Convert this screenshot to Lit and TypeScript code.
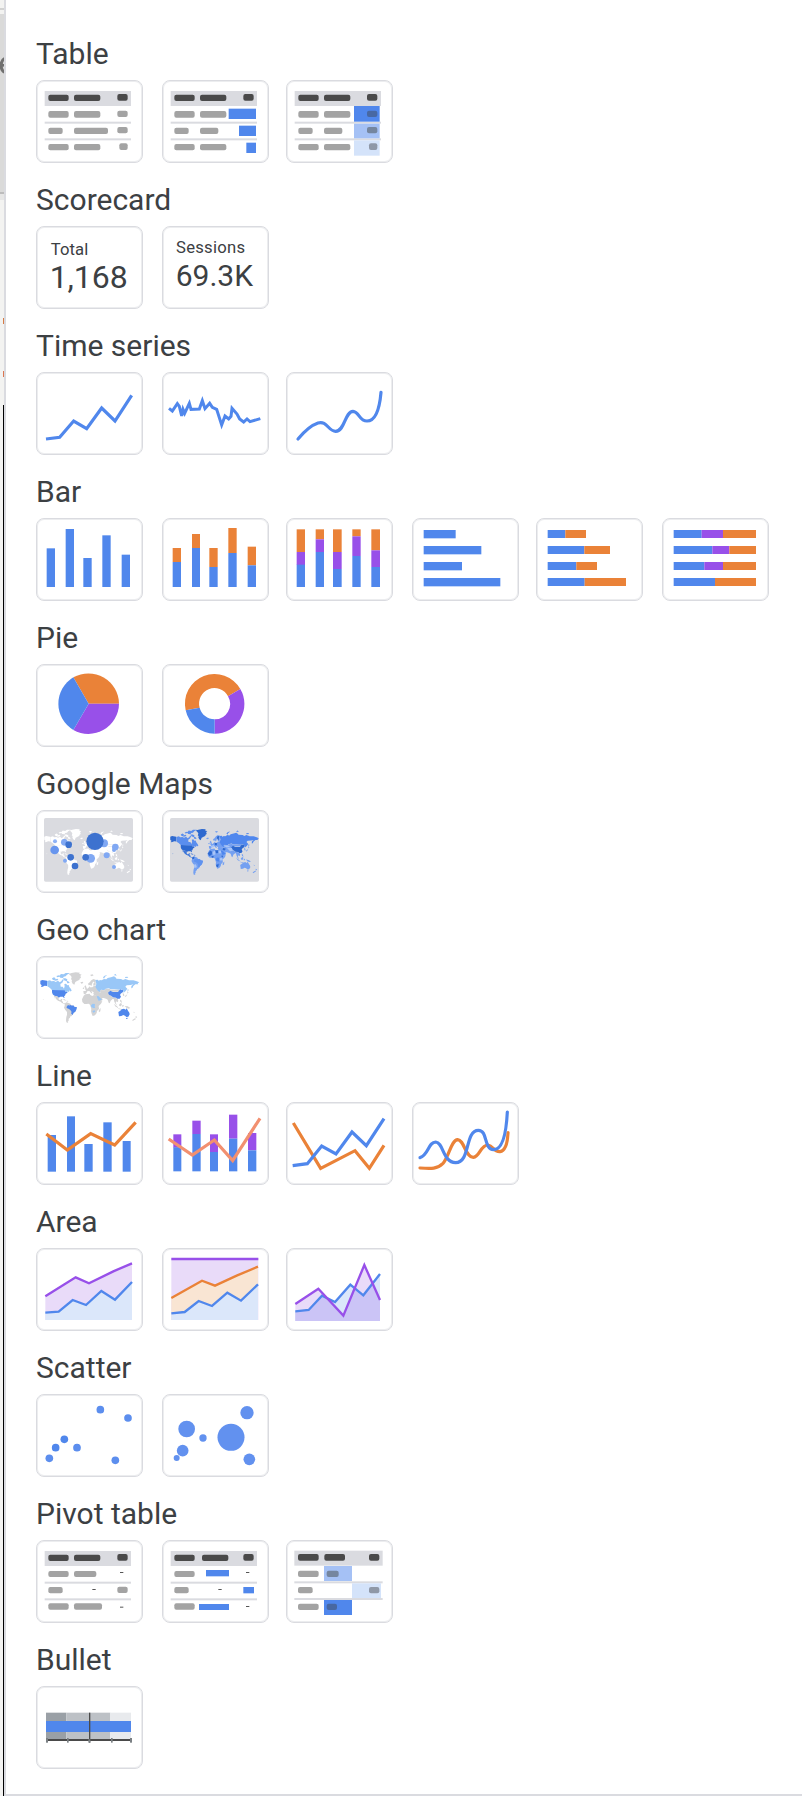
import { LitElement, html, svg, css } from "lit";
import { customElement } from "lit/decorators.js";

const BLUE = "#5087ec";
const ORANGE = "#ea8238";
const PURPLE = "#9850e9";
const RULE = "#dadbe0";
const DARK = "#4a4a4a";
const MID = "#a3a3a3";

type Box = [number, number, number, number, string?];

const rects = (list: Box[], fill = BLUE) =>
  list.map(([x, y, w, h, c]) => svg`<rect x=${x} y=${y} width=${w} height=${h} fill=${c ?? fill} />`);
const pills = (list: Box[], fill = MID) =>
  list.map(([x, y, w, h, c]) => svg`<rect x=${x} y=${y} width=${w} height=${h} rx="6" fill=${c ?? fill} />`);
const line = (points: string, stroke = BLUE, width = 9.6) =>
  svg`<polyline points=${points} fill="none" stroke=${stroke} stroke-width=${width} />`;
const curve = (d: string, stroke = BLUE, width = 9.6) =>
  svg`<path d=${d} fill="none" stroke=${stroke} stroke-width=${width} stroke-linecap="round" />`;
const area = (points: string, fill: string) => svg`<polygon points=${points} fill=${fill} />`;
const dots = (list: [number, number, number][], fill = "#6291ef") =>
  list.map(([x, y, r]) => svg`<circle cx=${x} cy=${y} r=${r} fill=${fill} />`);

/** Thumbnails are drawn on a 321 x 249 grid; x and y give the grid's origin. */
const card = (x: number, y: number, label: string, art: unknown) => html`
  <button class="card" aria-label=${label}>
    <svg viewBox="${x} ${y} 321 249" width="107" height="83">${art}</svg>
  </button>`;

const tableBase = (x: number, y: number, w = 259) => rects([
  [x, y, w, 45], [x, y + 92, w, 6], [x, y + 142, w, 6],
], RULE);

type Regions = Record<string, string>;
const LAND: Regions = {
  alaska: "M31 212L37 210L51 212V228L44 227L38 230L33 231L35 226L31 222Z",
  canada: "M51 213L60 211L64 214L72 213L77 216L84 212L89 217L94 214L98 208L101 210L97 218L91 222L92 230L98 230L102 236L104 229L103 222L108 221L112 226L116 225L118 231L123 237L125 243L119 241L117 246L112 244L108 248L105 242L66 240L59 233L52 229ZM66 205L72 202L77 205L74 208L83 206L85 210L77 212L68 209ZM79 198L87 196L88 200L82 202ZM87 198L93 192L101 193L107 189L120 189L111 194L107 199L101 200L99 204L91 203ZM99 205L106 205L112 208L111 212L117 215L119 219L112 220L110 214L102 211ZM119 240L124 241L121 245Z",
  greenland: "M116 192L125 189L137 187L150 188L147 191L155 194L151 197L153 203L148 207L149 209L141 213L136 216L133 224L128 221L125 215L126 210L123 208L125 201L121 196Z",
  usa: "M66 240L104 241L107 246L112 246L115 243L111 249L107 251L105 257L102 258L104 264L101 263L99 260L91 260L86 263L81 259L73 257L68 253L66 247Z",
  mexico: "M72 257L81 259L86 263L86 268L90 271L94 267L97 268L95 273L99 275L99 279L106 280L103 282L96 279L92 275L84 272L78 267L76 262L73 261L76 267L73 263ZM98 268L104 268L109 272L103 271ZM110 272L115 273L114 275L110 274ZM38 268L41 268L40 270Z",
  southAmerica: "M104 281L109 277L116 279L121 281L123 285L130 287L132 290L140 292L138 299L135 306L130 310L127 315L124 319L121 319L120 323L116 326L116 332L113 335L115 339L109 337L108 331L109 321L111 314L111 306L106 300L102 293L104 287Z",
  brazil: "M110 290L114 285L119 287L119 284L126 287L130 286L133 290L141 292L139 299L136 305L131 308L128 315L123 310L125 306L121 300L117 297L110 294Z",
  africa: "M161 257L166 253L179 251L181 255L187 258L192 255L200 257L202 264L207 273L217 274L213 281L206 288L207 297L201 303L200 309L195 316L188 318L185 311L183 304L184 297L182 290L180 284L176 281L169 282L163 282L157 276L156 268ZM209 297L212 294L211 304L207 307L206 302Z",
  europe: "M161 251L160 243L168 243L166 238L172 236L177 232L178 228L180 232L187 232L190 229L196 227L201 235L201 239L206 243L214 244L208 249L197 250L193 252L190 246L184 243L187 250L184 250L178 243L172 244L169 250L165 253ZM176 226L174 221L179 217L184 211L190 207L197 209L197 226L190 227L190 221L194 216L189 215L186 222L184 229L181 225ZM163 229L167 226L170 234L171 238L164 238L166 235ZM159 233L163 232L162 237L158 236ZM151 217L158 215L160 219L154 221ZM180 195L187 193L191 196L185 199Z",
  russia: "M196 210L203 209L208 214L208 210L215 211L222 207L229 208L233 204L243 202L252 199L258 203L259 206L273 207L279 210L286 207L297 211L310 211L318 213L328 217L323 220L325 223L316 223L310 228L307 234L304 235L304 228L310 223L302 225L290 226L286 230L292 236L287 243L281 248L279 241L274 237L266 239L253 238L243 238L236 235L225 237L224 241L213 239L210 246L203 242L200 237L196 230L199 222ZM219 202L224 197L232 195L225 200L222 206ZM251 195L257 192L260 197ZM285 201L292 200L295 203L286 204ZM293 237L296 239L293 246Z",
  asia: "M189 250L198 249L207 249L212 247L211 240L224 241L226 237L237 236L243 239L266 239L269 242L265 245L249 245L242 243L237 247L241 256L248 262L255 263L263 266L265 272L263 277L259 274L257 278L261 286L257 283L253 275L251 267L248 267L242 272L239 280L236 278L233 269L228 266L221 264L216 264L218 270L208 276L205 274L201 266L199 258L192 255ZM278 248L282 252L283 258L279 257ZM292 245L296 247L292 251ZM292 253L289 259L284 262L286 257ZM251 281L261 289L266 294L257 290ZM264 295L275 297L276 299L266 297ZM267 284L272 279L276 282L273 289L268 288ZM277 285L282 286L279 291L277 290ZM270 269L274 271L276 279L271 275ZM284 288L293 289L301 294L296 296L290 294Z",
  saudi: "M200 258L206 259L211 264L216 269L211 271L206 273L203 267Z",
  congo: "M183 286L188 281L195 282L194 291L196 294L190 294L184 291ZM187 303L194 301L196 305L190 308Z",
  china: "M234 248L241 242L249 246L264 246L270 238L279 240L279 246L272 251L270 255L273 260L269 266L262 266L258 263L249 262L243 257L237 254Z",
  australia: "M265 306L271 302L275 298L282 296L287 299L290 295L294 302L298 308L299 313L295 320L289 321L285 317L280 315L274 318L267 319ZM288 324L293 323L292 327L289 327Z",
  zealand: "M317 318L322 321L317 325ZM315 325L318 327L308 333L307 330ZM309 305L314 307L313 309Z",
};
const world = (base: string, tint: Regions = {}, accents: unknown = "") => svg`
  ${Object.entries(LAND).map(([name, d]) => svg`<path d=${d} fill=${tint[name] ?? base} />`)}${accents}`;

const choroplethPatches = svg`
  <path d="M156 268L165 258L172 263L169 273L162 276ZM169 276L176 276L176 282L170 282ZM204 272L208 279L202 281ZM181 257L192 257L192 266L184 267ZM184 305L193 304L191 313L186 312ZM104 281L112 278L111 285L105 287ZM187 212L195 209L193 224L188 220ZM180 232L188 234L186 241L180 240ZM208 249L217 252L213 258L206 256Z" fill="#2e69cf" />
  <path d="M172 263L181 258L182 271L175 273ZM192 258L200 259L202 267L193 268ZM196 284L204 281L207 289L199 292ZM221 250L237 249L241 259L231 260ZM208 241L225 241L232 246L220 248ZM109 305L117 303L120 313L112 316ZM166 243L178 239L177 247L168 249Z" fill="#a9c5f7" />`;

const sections: { title: string; cards: unknown[] }[] = [
  {
    title: "Table",
    cards: [
      card(108, 150, "Table", svg`
        ${tableBase(134, 183)}
        ${pills([[145, 194, 61, 19], [222, 194, 79, 19], [352, 192, 31, 20]], DARK)}
        ${pills([[145, 243, 61, 20], [222, 243, 79, 20], [352, 242, 31, 19], [145, 293, 43, 19], [222, 293, 102, 19], [352, 291, 31, 19], [145, 342, 61, 19], [222, 342, 79, 19], [358, 340, 25, 20]])}`),
      card(486, 150, "Table with bars", svg`
        ${tableBase(512, 183)}
        ${pills([[523, 194, 61, 19], [600, 194, 79, 19], [730, 192, 31, 20]], DARK)}
        ${pills([[523, 243, 61, 20], [600, 243, 79, 20], [523, 293, 43, 19], [600, 293, 55, 19], [523, 342, 61, 19], [600, 342, 79, 19]])}
        ${rects([[686, 236, 82, 31], [717, 287, 51, 31], [739, 338, 29, 31]])}`),
      card(858, 150, "Table with heatmap", svg`
        ${tableBase(884, 183)}
        ${rects([[1062, 228, 77, 47], [1062, 281, 77, 44, "#a5c1f5"], [1062, 331, 77, 46, "#d4e3fa"]])}
        ${pills([[895, 194, 61, 19], [972, 194, 79, 19], [1101, 192, 31, 20]], DARK)}
        ${pills([[895, 243, 61, 20], [972, 243, 79, 20], [1101, 242, 31, 19, "#4868a2"], [895, 293, 43, 19], [972, 293, 55, 19], [1101, 291, 31, 19, "#75869f"], [895, 342, 61, 19], [972, 342, 79, 19], [1107, 340, 25, 20, "#8f98a7"]])}`),
    ],
  },
  {
    title: "Scorecard",
    cards: [
      card(108, 153, "Scorecard", svg`
        <text class="num" x="152" y="240" font-size="50" textLength="113">Total</text>
        <text class="num" x="149" y="339" font-size="96" textLength="234">1,168</text>`),
      card(486, 153, "Compact scorecard", svg`
        <text class="num" x="528" y="235" font-size="50" textLength="207">Sessions</text>
        <text class="num" x="527" y="333" font-size="90" textLength="232">69.3K</text>`),
    ],
  },
  {
    title: "Time series",
    cards: [
      card(108, 591, "Time series", line("138,792 179,787 221,738 260,761 305,699 345,738 395,661")),
      card(486, 591, "Sparkline", line("507,700 517,708 532,686 538,694 545,723 549,703 554,715 568,685 573,703 598,702 607,677 615,701 629,685 637,697 650,703 665,750 675,723 686,732 693,724 696,700 711,717 719,732 731,741 741,732 750,740 781,731", BLUE, 9)),
      card(858, 591, "Smoothed time series", curve("M894 792C914 768 936 750 954 744C981 736 985 769 1007 769C1035 769 1034 710 1059 709C1078 710 1077 738 1101 738C1131 738 1140 686 1143 652")),
    ],
  },
  {
    title: "Bar",
    cards: [
      card(18, 144, "Column chart", rects([[50, 235, 25, 116], [107, 177, 25, 174], [160, 264, 25, 87], [217, 196, 25, 155], [275, 254, 25, 97]])),
      card(396, 144, "Stacked column chart", svg`
        ${rects([[428, 234, 25, 42], [486, 192, 24, 42], [538, 234, 25, 57], [595, 174, 25, 75], [653, 230, 25, 56]], ORANGE)}
        ${rects([[428, 276, 25, 75], [486, 234, 24, 117], [538, 291, 25, 60], [595, 249, 25, 102], [653, 286, 25, 65]])}`),
      card(768, 144, "100% stacked column chart", svg`
        ${rects([[800, 178, 25, 68], [857, 178, 25, 30], [909, 178, 26, 68], [967, 178, 25, 21], [1024, 178, 26, 63]], ORANGE)}
        ${rects([[800, 246, 25, 39], [857, 208, 25, 38], [909, 246, 26, 51], [967, 199, 25, 59], [1024, 241, 26, 50]], PURPLE)}
        ${rects([[800, 284, 25, 67], [857, 246, 25, 105], [909, 297, 26, 54], [967, 258, 25, 93], [1024, 291, 26, 60]])}`),
      card(36, 24, "Bar chart", rects([[71, 60, 96, 25], [71, 108, 173, 25], [71, 156, 115, 25], [71, 204, 230, 25]])),
      card(408, 24, "Stacked bar chart", svg`
        ${rects([[443, 60, 53, 24], [443, 108, 110, 24], [443, 156, 86, 24], [443, 204, 111, 24]])}
        ${rects([[496, 60, 62, 24], [553, 108, 77, 24], [529, 156, 62, 24], [554, 204, 124, 24]], ORANGE)}`),
      card(786, 24, "100% stacked bar chart", svg`
        ${rects([[821, 60, 84, 24], [821, 108, 116, 24], [821, 156, 92, 24], [821, 204, 124, 24]])}
        ${rects([[905, 60, 64, 24], [937, 108, 51, 24], [913, 156, 56, 24]], PURPLE)}
        ${rects([[969, 60, 99, 24], [988, 108, 80, 24], [969, 156, 99, 24], [945, 204, 123, 24]], ORANGE)}`),
    ],
  },
  {
    title: "Pie",
    cards: [
      card(18, 132, "Pie chart", svg`
        <path d="M176 251L130 172A92 92 0 0 1 267 251Z" fill=${ORANGE} />
        <path d="M176 251H267A92 92 0 0 1 130 330Z" fill=${PURPLE} />
        <path d="M176 251L130 330A92 92 0 0 1 130 172Z" fill=${BLUE} />`),
      card(396, 132, "Donut chart", svg`
        <path d="M467 271A89 89 0 0 1 631 207L594 229A46 46 0 0 0 509 263Z" fill=${ORANGE} />
        <path d="M631 207A89 89 0 0 1 554 341V298A46 46 0 0 0 594 229Z" fill=${PURPLE} />
        <path d="M467 271A89 89 0 0 0 554 341V298A46 46 0 0 1 509 263Z" fill=${BLUE} />`),
    ],
  },
  {
    title: "Google Maps",
    cards: [
      card(18, 570, "Bubble map", svg`
        <rect x="42" y="594" width="267" height="191" rx="5" fill=${RULE} />
        <g transform="translate(15.1 457.6) scale(.896 .907)">${world("#fff")}</g>
        ${dots([[75, 664, 6]], "#8fb3f5")}
        ${dots([[103, 667, 10], [222, 670, 12], [256, 681, 10], [182, 715, 13], [230, 706, 9], [105, 722, 6], [252, 741, 6], [252, 690, 6]], "#80a8f3")}
        ${dots([[74, 690, 13]], "#6795ee")}
        ${dots([[116, 674, 10], [195, 664, 26], [122, 712, 10], [167, 712, 10], [135, 738, 10]], "#3d72cf")}`),
      card(396, 570, "Filled map", svg`
        <rect x="420" y="594" width="267" height="191" rx="5" fill=${RULE} />
        <g transform="translate(393.1 457.6) scale(.896 .907)">${world("#74a0f1", { alaska: "#2e69cf", usa: "#2e69cf", greenland: "#2e69cf", china: "#2e69cf", russia: "#4f87ee", canada: "#5a8eee", mexico: "#3c75d8", saudi: "#4f87ee", congo: "#4f87ee", brazil: "#5f92ef" }, choroplethPatches)}</g>`),
    ],
  },
  {
    title: "Geo chart",
    cards: [
      card(18, 138, "Geo chart", world("#d3d3d4", {
        alaska: BLUE, usa: BLUE, brazil: BLUE, china: BLUE, australia: BLUE,
        canada: "#99c7f7", russia: "#99c7f7", saudi: "#99c7f7", congo: "#99c7f7",
      })),
    ],
  },
  {
    title: "Line",
    cards: [
      card(18, 126, "Combo chart", svg`
        ${rects([[53, 225, 25, 110], [111, 169, 24, 166], [163, 252, 25, 83], [220, 187, 25, 148], [278, 243, 24, 92]])}
        ${line("49,222 112,270 182,221 254,255 317,187", ORANGE)}`),
      card(396, 126, "Stacked combo chart", svg`
        ${rects([[430, 223, 24, 40], [487, 182, 25, 40], [540, 223, 24, 53], [597, 164, 25, 72], [654, 219, 25, 52]], PURPLE)}
        ${rects([[430, 262, 24, 72], [487, 222, 25, 112], [540, 276, 24, 58], [597, 236, 25, 98], [654, 271, 25, 63]])}
        ${line("416,237 487,285 553,240 608,302 690,175", "#f29070")}`),
      card(768, 126, "Line chart", svg`
        ${line("790,189 872,325 975,272 1018,325 1062,256", ORANGE)}
        ${line("788,317 832,311 875,258 918,282 966,216 1009,257 1062,176")}`),
      card(1146, 126, "Smoothed line chart", svg`
        ${curve("M1170 324C1205 327 1222 327 1239 310C1257 291 1263 240 1283 239C1303 240 1306 292 1330 292C1350 290 1351 255 1374 255C1391 257 1389 276 1410 275C1429 272 1433 241 1434 218", ORANGE)}
        ${curve("M1170 293C1195 287 1195 246 1217 246C1241 248 1238 307 1277 308C1322 308 1304 211 1345 211C1374 211 1360 267 1391 269C1424 269 1430 195 1432 156")}`),
    ],
  },
  {
    title: "Area",
    cards: [
      card(18, 129, "Area chart", svg`
        ${area("46,274 137,217 177,235 250,199 306,175 306,345 46,345", "#e9dbf9")}
        ${area("46,323 86,320 128,284 168,300 214,258 255,284 306,231 306,345 46,345", "#dbe7fa")}
        ${line("46,274 137,217 177,235 250,199 306,175", PURPLE, 7)}
        ${line("46,323 86,320 128,285 168,300 214,258 255,284 306,231", BLUE, 7)}`),
      card(396, 129, "100% stacked area chart", svg`
        ${rects([[424, 160, 261, 185]], "#e9dbf9")}
        ${area("424,279 516,227 555,242 620,212 684,185 684,345 424,345", "#f9e5d3")}
        ${area("424,325 464,321 506,288 546,303 592,263 633,287 684,238 684,345 424,345", "#dbe7fa")}
        ${line("424,162 685,162", PURPLE, 7)}
        ${line("424,279 516,227 555,242 620,212 684,185", ORANGE, 7)}
        ${line("424,325 464,321 506,288 546,303 592,263 633,287 684,238", BLUE, 7)}`),
      card(768, 129, "Overlapping area chart", svg`
        ${area("796,297 865,251 940,332 1003,180 1050,285 1050,348 796,348", "#e9dbf9")}
        ${area("796,319 836,315 876,272 915,291 961,239 1000,271 1050,207 1050,348 796,348", "#dbe7fa")}
        ${area("796,319 836,315 876,272 882,269 940,332 971,248 1000,271 1029,233 1050,285 1050,348 796,348", "#cbc4f6")}
        ${line("796,319 836,315 876,272 915,291 961,239 1000,271 1050,207", BLUE, 7)}
        ${line("796,297 865,251 940,332 1003,180 1050,285", PURPLE, 7)}`),
    ],
  },
  {
    title: "Scatter",
    cards: [
      card(18, 132, "Scatter chart", svg`
        ${dots([[58, 325, 11.5], [141, 293, 11.5], [211, 179, 11.5], [294, 204, 11.5], [256, 331, 11.5]], "#5c8eee")}
        ${dots([[77, 293, 11.5], [103, 268, 11.5]], BLUE)}`),
      card(396, 132, "Bubble chart", dots([[440, 324, 9], [458, 302, 17.5], [470, 237, 25], [519, 264, 11], [603, 262, 40.5], [651, 188, 20], [658, 328, 17.5]])),
    ],
  },
  {
    title: "Pivot table",
    cards: [
      card(18, 570, "Pivot table", svg`
        ${tableBase(44, 603)}
        ${pills([[55, 614, 61, 19], [132, 614, 79, 19], [262, 612, 31, 20]], DARK)}
        ${pills([[55, 663, 61, 18], [132, 663, 67, 18], [55, 711, 43, 19], [262, 710, 31, 19], [55, 760, 61, 19], [132, 760, 84, 19]])}
        ${rects([[270, 666, 10, 3], [187, 717, 10, 3], [270, 770, 10, 3]], "#555")}`),
      card(396, 570, "Pivot table with bars", svg`
        ${tableBase(422, 603)}
        ${pills([[433, 614, 61, 19], [516, 614, 79, 19], [640, 612, 31, 20]], DARK)}
        ${pills([[433, 663, 61, 18], [433, 711, 43, 19], [433, 760, 61, 19]])}
        ${rects([[528, 660, 69, 19], [640, 711, 32, 19], [507, 762, 90, 18]])}
        ${rects([[648, 666, 10, 3], [565, 717, 10, 3], [648, 768, 10, 3]], "#555")}`),
      card(768, 570, "Pivot table with heatmap", svg`
        ${tableBase(793, 602, 265)}
        ${rects([[882, 648, 84, 45, "#a5c1f5"], [966, 700, 87, 44, "#d4e3fa"], [882, 750, 84, 45]])}
        ${pills([[804, 612, 62, 20], [883, 612, 62, 20], [1017, 612, 31, 20]], DARK)}
        ${pills([[804, 662, 62, 19], [890, 662, 36, 19, "#75869f"], [804, 711, 44, 19], [1017, 711, 31, 19, "#8f98a7"], [804, 761, 62, 19], [890, 761, 31, 19, "#4868a2"]])}`),
    ],
  },
  {
    title: "Bullet",
    cards: [
      card(108, 138, "Bullet chart", svg`
        ${rects([[138, 218, 61, 79, "#9aa0a6"], [199, 218, 132, 79, "#bdc1c6"], [331, 218, 62, 79, "#e8eaed"], [138, 243, 255, 33, BLUE]])}
        ${rects([[140, 297, 254, 6], [267, 218, 4, 90]], DARK)}
        ${rects([[138, 294, 6, 14], [201, 294, 5, 14], [265, 298, 6, 10], [333, 294, 5, 14], [390, 294, 6, 14]], "#7b8084")}`),
    ],
  },
];

@customElement("app-root")
export class AppRoot extends LitElement {
  static styles = css`
    :host {
      display: flex;
      width: 802px;
      height: 1796px;
      overflow: hidden;
      background: #fff;
      color: #3c4043;
      font-family: Roboto, "Liberation Sans", sans-serif;
    }
    .edge {
      flex: none;
      width: 4px;
      height: 1796px;
    }
    .panel {
      box-sizing: border-box;
      width: 798px;
      height: 1796px;
      padding: 34px 0 0 30px;
      border-left: 2px solid #dadbe0;
      border-bottom: 2px solid #dadbe0;
    }
    section {
      height: 146px;
    }
    h2 {
      margin: 0;
      height: 46px;
      font-size: 30px;
      font-weight: 400;
      line-height: 40px;
      white-space: nowrap;
    }
    .cards {
      display: grid;
      grid-template-columns: 126px 124px 126px 124px 126px 107px;
    }
    .card {
      display: block;
      position: relative;
      box-sizing: border-box;
      width: 107px;
      height: 83px;
      padding: 0;
      border: 1px solid #dadbe0;
      border-radius: 8px;
      background: #fff;
      box-shadow: inset 0 0 0 1px rgba(218, 219, 224, 0.5);
      overflow: hidden;
    }
    .card svg {
      display: block;
      margin: -1px;
    }
    .num {
      font-family: Roboto, "Liberation Sans", sans-serif;
      fill: #3c4043;
    }
  `;

  render() {
    return html`
      <svg class="edge" viewBox="0 0 4 1796" aria-hidden="true">
        ${rects([
          [0, 0, 4, 1796, "#f3f3f1"], [0, 8, 4, 2, "#d2d2d1"], [0, 14, 4, 178, "#dadad9"],
          [0, 192, 4, 2, "#bcbcbc"], [0, 194, 4, 6, "#e6e6e5"],
          [3, 318, 1, 6, "#d67b45"], [3, 371, 1, 6, "#dc7651"], [3, 405, 1, 1391, "#000"],
        ])}
        <path d="M4.5 58.5Q1.2 60 1.2 65.5T4.5 72" fill="none" stroke="#70706f" stroke-width="3" />
        <rect x="0" y="64" width="4" height="2.6" fill="#70706f" />
      </svg>
      <main class="panel">
        ${sections.map((s) => html`
          <section>
            <h2>${s.title}</h2>
            <div class="cards">${s.cards}</div>
          </section>`)}
      </main>`;
  }
}
